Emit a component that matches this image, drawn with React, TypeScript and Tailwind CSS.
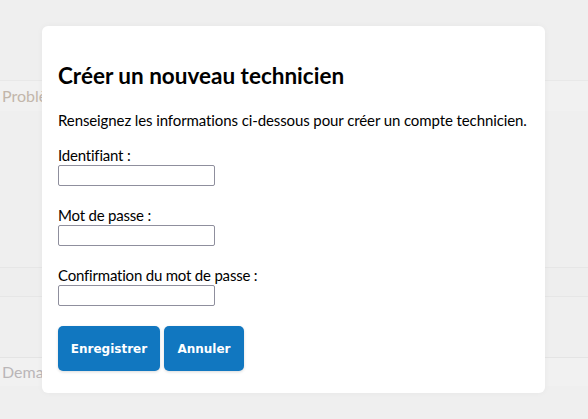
export default function App() {
  const fields = ["Identifiant :", "Mot de passe :", "Confirmation du mot de passe :"];

  return (
    <div className="relative h-[419px] w-[588px] overflow-hidden bg-[#efefef] font-['Lato','Open_Sans',sans-serif]">
      {/* page behind the dialog */}
      <div className="flex flex-col pt-[80px]">
        <div className="flex h-[31px] items-center border-t border-[#e8e8e8] bg-[#f1f1f1] pl-[2px] text-[16px] text-[#c2b6aa]">
          Problèmes
        </div>
        <div className="h-[156px]" />
        <div className="h-[30px] border-y border-[#e6e6e6] bg-[#eeeeee]" />
        <div className="h-[60px]" />
        <div className="flex h-[29px] items-center border-t border-[#e4e4e4] bg-[#f1f1f1] pl-[2px] text-[16px] text-[#bab6b8]">
          Demandes
        </div>
      </div>

      {/* dialog */}
      <div className="absolute left-[42px] top-[26px] flex h-[367px] w-[503px] flex-col rounded-[6px] bg-white px-4 pt-[36px] text-black shadow-[0_0_6px_rgba(0,0,0,0.04)]">
        <h2 className="text-[22.5px] leading-[28px] font-bold">Créer un nouveau technicien</h2>
        <p className="mt-[20px] whitespace-nowrap text-[15px] leading-[20px] tracking-[-0.1px]">
          Renseignez les informations ci-dessous pour créer un compte technicien.
        </p>
        <div className="mt-[15px] flex flex-col gap-[19px]">
          {fields.map((f) => (
            <div key={f} className="flex flex-col">
              <label className="text-[15px] leading-[20px] tracking-[-0.2px]">{f}</label>
              <input
                type={f.startsWith("Identifiant") ? "text" : "password"}
                className="h-[21px] w-[157px] rounded-[2px] border border-[#8f8f9d] bg-white"
              />
            </div>
          ))}
        </div>
        <div className="mt-[20px] flex gap-[4px] font-['DejaVu_Sans',sans-serif]">
          <button className="h-[45px] w-[102px] rounded-[5px] bg-[#1177c0] text-[12px] font-bold text-white shadow-[0_1px_3px_rgba(0,0,0,0.15)]">
            Enregistrer
          </button>
          <button className="h-[45px] w-[80px] rounded-[5px] bg-[#1177c0] text-[12px] font-bold text-white shadow-[0_1px_3px_rgba(0,0,0,0.15)]">
            Annuler
          </button>
        </div>
      </div>
    </div>
  );
}
